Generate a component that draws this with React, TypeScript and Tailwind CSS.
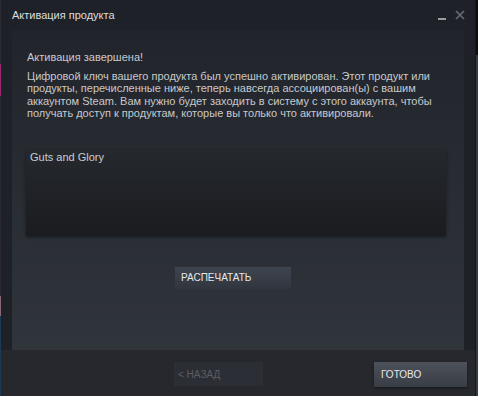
export default function App() {
  return (
    <div className="flex h-[396px] w-[478px] overflow-hidden bg-[#111318] font-['Liberation_Sans',Arial,sans-serif]">
      {/* край соседнего окна слева */}
      <div className="flex w-px flex-col">
        <div className="h-[64px] bg-[#2a2c33]" />
        <div className="h-[32px] bg-[#9a2a6e]" />
        <div className="h-[200px] bg-[#2b2a33]" />
        <div className="h-[20px] bg-[#8a6a78]" />
        <div className="flex-1 bg-[#1d3a55]" />
      </div>

      {/* окно */}
      <div className="flex w-[474px] flex-col bg-[#1f2128]">
        {/* заголовок */}
        <div className="flex h-[30px] items-center justify-between pl-[11px] pr-[10px]">
          <span className="text-[11px] text-[#dcdedf]">Активация продукта</span>
          <div className="flex items-center gap-[9px]">
            <div className="mt-[7px] h-[2px] w-[8px] bg-[#9a9ca1]" />
            <svg width="10" height="10" viewBox="0 0 10 10" className="text-[#6a6d73]">
              <path d="M1 1 L9 9 M9 1 L1 9" stroke="currentColor" strokeWidth="1.6" />
            </svg>
          </div>
        </div>

        {/* контент */}
        <div className="mx-[11px] flex flex-1 flex-col bg-gradient-to-b from-[#21242b] to-[#30343b] px-[14px] pt-[20px]">
          <p className="pl-px text-[11px] leading-[14px] text-[#c7c9cc]">Активация завершена!</p>
          <p className="mt-[6px] whitespace-nowrap pl-px text-[11px] leading-[12.4px] text-[#c7c9cc]">
            Цифровой ключ вашего продукта был успешно активирован. Этот продукт или
            <br />
            продукты, перечисленные ниже, теперь навсегда ассоциирован(ы) с вашим
            <br />
            аккаунтом Steam. Вам нужно будет заходить в систему с этого аккаунта, чтобы
            <br />
            получать доступ к продуктам, которые вы только что активировали.
          </p>

          <div className="mt-[30px] h-[86px] w-[420px] bg-gradient-to-b from-[#25282d] to-[#1a1c20] pl-[4px] shadow-[0_1px_3px_rgba(0,0,0,0.45)]">
            <p className="text-[11px] leading-[14px] text-[#c9ced4]">Guts and Glory</p>
          </div>

          <button className="ml-[149px] mt-[31px] flex h-[22px] w-[116px] items-center bg-gradient-to-b from-[#3f454f] to-[#30353e] pl-[6px] text-[10px] text-[#e6e8ea]">
            РАСПЕЧАТАТЬ
          </button>
        </div>

        {/* подвал */}
        <div className="flex h-[46px] justify-between bg-[#26282e] pr-[8px] pt-[12px]">
          <button className="ml-[173px] flex h-[24px] w-[89px] items-center bg-[#2b2e34] pl-[4px] text-[10px] text-[#5b5e65]">
            &lt; НАЗАД
          </button>
          <button className="flex h-[25px] w-[93px] items-center bg-gradient-to-b from-[#4c515a] to-[#393d45] pl-[7px] text-[10px] text-[#e8e9eb] shadow-[0_1px_2px_rgba(0,0,0,0.5)]">
            ГОТОВО
          </button>
        </div>
      </div>

      {/* край справа */}
      <div className="w-px bg-[#15171b]" />
      <div className="flex w-[2px] flex-col">
        <div className="h-[55px] bg-[#0b0d10]" />
        <div className="flex-1 bg-[#343b45]" />
      </div>
    </div>
  );
}
